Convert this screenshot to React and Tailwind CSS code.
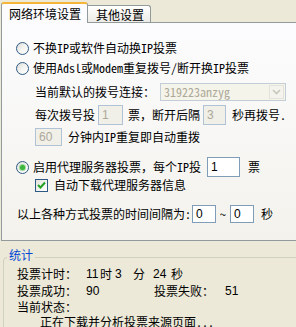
import React from "react";

const Radio = ({ checked }) => (
  <span className="w-[13px] h-[13px] rounded-full border border-[#2F5A85] bg-gradient-to-br from-[#DCDCD7] via-[#F4F4F1] to-white flex items-center justify-center shrink-0">
    {checked && (
      <span className="w-[5px] h-[5px] rounded-full bg-[#3DB43D] shadow-[0_0_0_1px_#9BDB9B]" />
    )}
  </span>
);

const Check = () => (
  <span className="w-[13px] h-[13px] border border-[#2F5A85] bg-gradient-to-br from-[#E4E4DE] to-white flex items-center justify-center shrink-0">
    <svg width="9" height="9" viewBox="0 0 9 9">
      <path d="M1 4 L3.5 6.5 L8 1.5" stroke="#21A121" strokeWidth="2" fill="none" />
    </svg>
  </span>
);

const Input = ({ w, h = 20, value, disabled }) => (
  <span
    className={
      "shrink-0 flex items-center pl-[3px] font-['Liberation_Sans',sans-serif] text-[12px] border " +
      (disabled
        ? "border-[#AFC2D6] bg-[#F0EFE8] text-[#ACA899]"
        : "border-[#7F9DB9] bg-white text-black")
    }
    style={{ width: w, height: h }}
  >
    {value}
  </span>
);

export default function App() {
  return (
    <div className="w-[296px] h-[327px] overflow-hidden bg-[#ECE9D8] text-[12px] leading-[16px] text-black font-['Noto_Sans_Mono_CJK_SC','Noto_Sans_CJK_SC',sans-serif]">
      {/* Tabs */}
      <div className="flex items-end h-[23px] pl-[1px] relative z-10">
        <div className="w-[87px] h-[21px] bg-[#FCFCFE] border-x border-[#919B9C] rounded-t-[3px] border-t-[2px] border-t-[#F5B53A] pl-[7px] pt-[2px] whitespace-nowrap">
          网络环境设置
        </div>
        <div className="w-[63px] h-[17px] mb-[1px] border-t border-r border-[#919B9C] rounded-tr-[3px] bg-gradient-to-b from-white to-[#ECEBE6] pl-[8px] pt-[1px] whitespace-nowrap">
          其他设置
        </div>
      </div>

      {/* Panel */}
      <div className="-mt-px ml-[1px] w-[310px] h-[219px] border border-[#919B9C] bg-gradient-to-b from-[#FCFCFE] to-[#F3F2EC] flex flex-col whitespace-nowrap">
        <div className="mt-[17px] h-[16px] pl-[14px] flex items-center gap-[4px]">
          <Radio />
          <span>不换IP或软件自动换IP投票</span>
        </div>
        <div className="mt-[4px] h-[16px] pl-[14px] flex items-center gap-[4px]">
          <Radio />
          <span>使用Adsl或Modem重复拨号/断开换IP投票</span>
        </div>
        <div className="mt-[7px] h-[18px] pl-[33px] flex items-center">
          <span className="w-[125px]">当前默认的拨号连接：</span>
          <div className="w-[126px] h-[18px] border border-[#C3CDD8] bg-[#F5F4EA] flex items-center">
            <span className="flex-1 pl-[3px] text-[#ACA899]">319223anzyg</span>
            <span className="w-[15px] h-[14px] mr-[1px] border border-[#E3E3DB] bg-[#F4F3EE] flex items-center justify-center">
              <svg width="9" height="6" viewBox="0 0 9 6">
                <path d="M1 1 L4.5 4.5 L8 1" stroke="#C9C7BA" strokeWidth="1.6" fill="none" />
              </svg>
            </span>
          </div>
        </div>
        <div className="mt-[4px] h-[20px] pl-[33px] flex items-center">
          <span>每次拨号投</span>
          <span className="ml-[3px]"><Input w={25} value="1" disabled /></span>
          <span className="ml-[5px]">票，断开后隔</span>
          <span className="ml-[3px]"><Input w={23} value="3" disabled /></span>
          <span className="ml-[6px]">秒再拨号.</span>
        </div>
        <div className="mt-[3px] h-[18px] pl-[33px] flex items-center">
          <Input w={27} h={18} value="60" disabled />
          <span className="ml-[6px]">分钟内IP重复即自动重拨</span>
        </div>
        <div className="mt-[11px] h-[20px] pl-[14px] flex items-center">
          <Radio checked />
          <span className="ml-[4px]">启用代理服务器投票，每个IP投</span>
          <span className="ml-[6px]"><Input w={33} value="1" /></span>
          <span className="ml-[8px]">票</span>
        </div>
        <div className="mt-[1px] h-[14px] pl-[33px] flex items-center">
          <Check />
          <span className="ml-[6px]">自动下载代理服务器信息</span>
        </div>
        <div className="mt-[13px] h-[18px] pl-[15px] flex items-center">
          <span>以上各种方式投票的时间间隔为:</span>
          <span className="ml-[1px]"><Input w={24} h={18} value="0" /></span>
          <span className="ml-[4px] w-[6px]">~</span>
          <span className="ml-[4px]"><Input w={24} h={18} value="0" /></span>
          <span className="ml-[7px]">秒</span>
        </div>
      </div>

      {/* Stats group */}
      <div className="mt-[16px] ml-[3px] w-[310px] h-[120px] border border-[#D0D0BF] rounded-[4px] relative whitespace-nowrap">
        <span className="absolute left-[3px] -top-[11px] px-[2px] bg-[#ECE9D8] text-[#0046D5]">统计</span>
        <div className="mt-[7px] h-[17px] pl-[13px] flex items-center">
          <span className="w-[69px]">投票计时：</span>
          <span className="w-[14px] font-['Liberation_Sans',sans-serif]">11</span>
          <span className="w-[15px]">时</span>
          <span className="w-[18px] font-['Liberation_Sans',sans-serif]">3</span>
          <span className="w-[20px]">分</span>
          <span className="w-[18px] font-['Liberation_Sans',sans-serif]">24</span>
          <span>秒</span>
        </div>
        <div className="h-[17px] pl-[13px] flex items-center">
          <span className="w-[69px]">投票成功：</span>
          <span className="w-[68px] font-['Liberation_Sans',sans-serif]">90</span>
          <span className="w-[71px]">投票失败：</span>
          <span className="font-['Liberation_Sans',sans-serif]">51</span>
        </div>
        <div className="h-[15px] pl-[13px] flex items-center leading-[15px]">
          <span>当前状态：</span>
        </div>
        <div className="h-[16px] pl-[36px] flex items-center">
          <span>正在下载并分析投票来源页面...</span>
        </div>
      </div>
    </div>
  );
}
